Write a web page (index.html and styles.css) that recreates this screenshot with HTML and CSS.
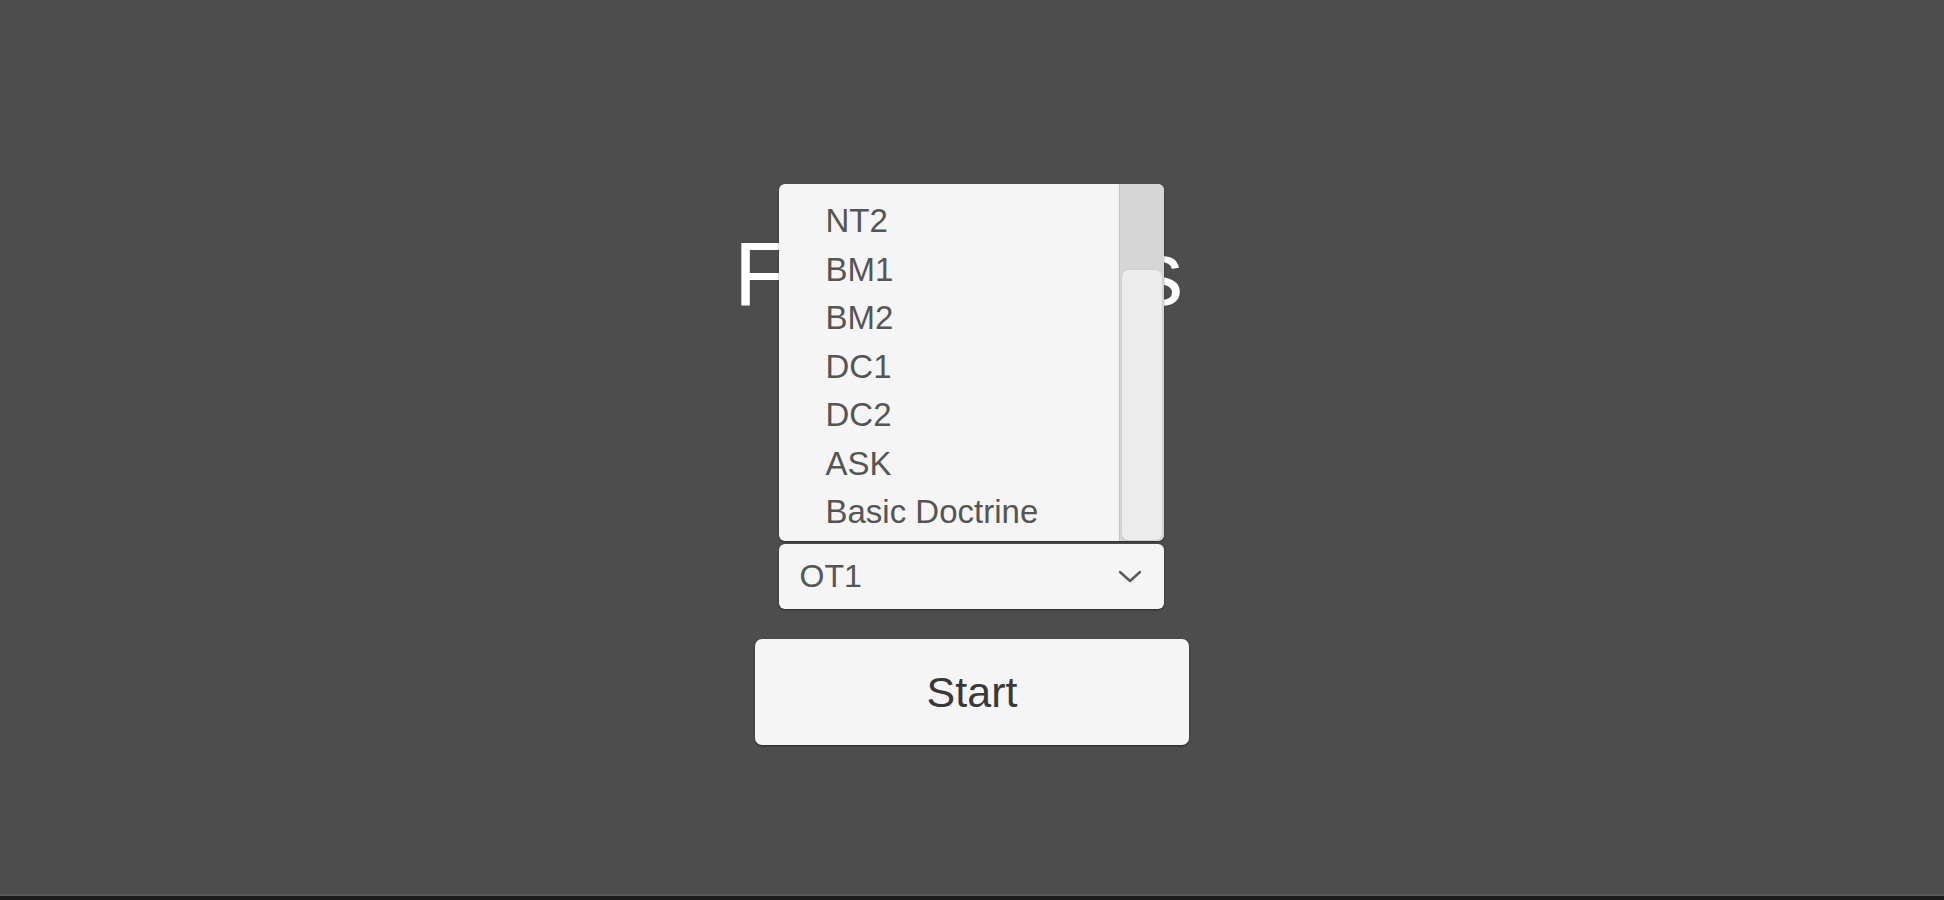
FILE: index.html
```html
<!DOCTYPE html>
<html lang="en">
<head>
<meta charset="utf-8">
<title>Flashcards</title>
<link rel="stylesheet" href="styles.css">
</head>
<body>
<main class="stage">
  <h1 class="title">Flashcards</h1>
  <div class="dropdown">
    <div class="popup">
      <ul class="options">
        <li>NT2</li>
        <li>BM1</li>
        <li>BM2</li>
        <li>DC1</li>
        <li>DC2</li>
        <li>ASK</li>
        <li>Basic Doctrine</li>
      </ul>
      <div class="scrollbar"><div class="handle"></div></div>
    </div>
    <button class="select" type="button">
      <span class="value">OT1</span>
      <svg class="chevron" width="24" height="14" viewBox="0 0 24 14"><path d="M2 2 L12 11 L22 2" fill="none" stroke="#5a5a5a" stroke-width="2.4" stroke-linecap="round" stroke-linejoin="round"/></svg>
    </button>
  </div>
  <button class="start" type="button">Start</button>
</main>
<footer class="bottom-bar"></footer>
</body>
</html>
```

FILE: styles.css
```css
* { box-sizing: border-box; }
html, body { margin: 0; padding: 0; }
body {
  height: 900px;
  background: #4d4d4d;
  font-family: "Liberation Sans", Arial, sans-serif;
  display: flex;
  flex-direction: column;
  overflow: hidden;
}
.stage {
  flex: 1;
  display: flex;
  flex-direction: column;
  align-items: center;
  padding-top: 224px;
}
.title {
  margin: 0;
  font-size: 90px;
  font-weight: normal;
  line-height: 100px;
  color: #ffffff;
  letter-spacing: 1px;
  padding-right: 26px;
}
.dropdown {
  position: relative;
  width: 385px;
  margin-top: 220px;
  margin-right: 2px;
}
.select {
  width: 100%;
  height: 65px;
  border: none;
  border-radius: 6px;
  background: #f5f5f5;
  box-shadow: 0 1px 2px rgba(0,0,0,0.45);
  display: flex;
  align-items: center;
  justify-content: space-between;
  padding: 0 22px 0 21px;
  font-family: inherit;
  cursor: pointer;
}
.value {
  font-size: 32px;
  color: #555555;
}
.chevron { display: block; }
.popup {
  position: absolute;
  left: 0;
  right: 0;
  bottom: calc(100% + 3px);
  height: 357px;
  background: #f5f5f5;
  border-radius: 6px;
  box-shadow: 0 1px 2px rgba(0,0,0,0.45);
  display: flex;
  overflow: hidden;
}
.options {
  list-style: none;
  margin: 0;
  padding: 13px 0 0 47px;
  flex: 1;
}
.options li {
  height: 48.5px;
  line-height: 48.5px;
  font-size: 33px;
  color: #555555;
  white-space: nowrap;
}
.scrollbar {
  width: 45px;
  background: #d6d6d6;
  border-left: 1px solid #c4c4c4;
  border-radius: 0 6px 6px 0;
  display: flex;
  flex-direction: column;
  justify-content: flex-end;
  padding: 0 2px 1px 2px;
}
.handle {
  height: 270px;
  background: #ececec;
  border-radius: 6px;
  box-shadow: 0 0 1px rgba(0,0,0,0.25);
}
.start {
  margin-top: 30px;
  width: 434px;
  height: 106px;
  border: none;
  border-radius: 7px;
  background: #f5f5f5;
  box-shadow: 0 1px 2px rgba(0,0,0,0.5);
  font-family: inherit;
  font-size: 43px;
  color: #383838;
  cursor: pointer;
}
.bottom-bar {
  height: 6px;
  border-top: 2px solid #575757;
  background: #1b1b1b;
}
```
